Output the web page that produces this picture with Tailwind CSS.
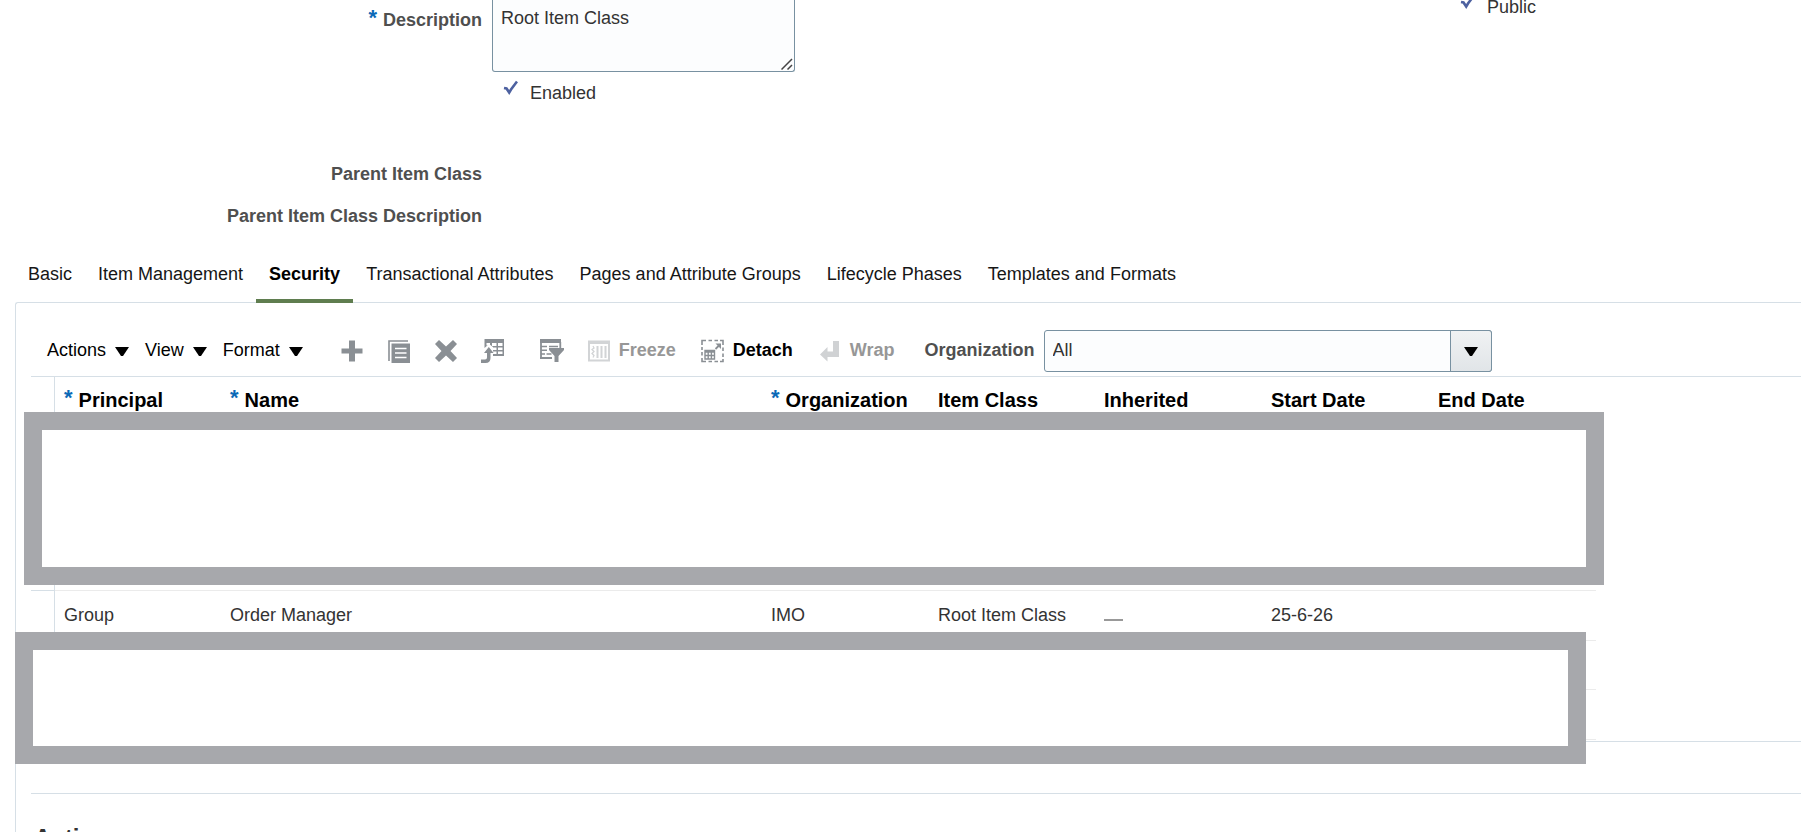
<!DOCTYPE html>
<html lang="en">
  <head>
    <meta charset="UTF-8" />
    <meta name="viewport" content="width=device-width, initial-scale=1" />
    <title>Edit Item Class</title>
    <script src="https://cdn.jsdelivr.net/npm/@tailwindcss/browser@4"></script>
  </head>
  <body class="h-screen overflow-hidden bg-white font-['Liberation_Sans',Arial,sans-serif] text-[18px] leading-5 text-[#333]">
    <!-- Item class details -->
    <form class="flex items-start justify-between">
      <div class="grid grid-cols-[482px_auto] gap-x-[10px]">
        <label for="description" class="flex items-start justify-end gap-1.5 pt-[10px] font-bold text-[#4f4f4f]">
          <span class="text-[22px] leading-4 text-[#0b69b7]">*</span>Description
        </label>
        <div class="relative w-[303px]">
          <textarea id="description" class="block h-[72px] w-full resize-none rounded-b-[3px] border border-t-0 border-[#7891a1] bg-[#fcfdfe] px-2 pt-2 focus:outline-none">Root Item Class</textarea>
          <svg class="pointer-events-none absolute bottom-0.5 right-0.5" width="12" height="12" viewBox="0 0 12 12" fill="none" stroke="#444" stroke-width="1.5"><path d="M.5 11.500 11 1M6.500 11.500 11 7" /></svg>
        </div>

        <label class="col-start-2 mt-[11px] flex gap-3 pl-[11px]">
          <span class="grid">
            <input type="checkbox" checked class="col-start-1 row-start-1 h-4 w-[15px] appearance-none" />
            <svg class="pointer-events-none col-start-1 row-start-1 -mt-[3px]" width="15" height="16" viewBox="0 0 15 16" fill="none" stroke="#4d61a0" stroke-width="2.6"><path d="M1 8 3.500 8.500 6.200 12.500 8 9.500 14 1.500" /></svg>
          </span>
          Enabled
        </label>

        <span class="mt-[61px] text-right font-bold text-[#4f4f4f]">Parent Item Class</span>
        <span class="col-start-1 mt-[22px] text-right font-bold text-[#4f4f4f]">Parent Item Class Description</span>
      </div>

      <label class="-mt-[3px] mr-[265px] flex gap-3">
        <span class="grid">
          <input type="checkbox" checked class="col-start-1 row-start-1 h-4 w-[15px] appearance-none" />
          <svg class="pointer-events-none col-start-1 row-start-1 -mt-[3px]" width="15" height="16" viewBox="0 0 15 16" fill="none" stroke="#4d61a0" stroke-width="2.6"><path d="M1 8 3.500 8.500 6.200 12.500 8 9.500 14 1.500" /></svg>
        </span>
        Public
      </label>
    </form>

    <!-- Tabs -->
    <nav class="relative z-10 ml-[15px] mt-[38px] flex text-[#161616]">
      <a href="#" class="border-b-4 border-transparent px-[13px] pb-[15px]">Basic</a>
      <a href="#" class="border-b-4 border-transparent px-[13px] pb-[15px]">Item Management</a>
      <a href="#" class="border-b-4 border-[#5f7d4f] px-[13px] pb-[15px] font-bold text-black">Security</a>
      <a href="#" class="border-b-4 border-transparent px-[13px] pb-[15px]">Transactional Attributes</a>
      <a href="#" class="border-b-4 border-transparent px-[13px] pb-[15px]">Pages and Attribute Groups</a>
      <a href="#" class="border-b-4 border-transparent px-[13px] pb-[15px]">Lifecycle Phases</a>
      <a href="#" class="border-b-4 border-transparent px-[13px] pb-[15px]">Templates and Formats</a>
    </nav>

    <section class="relative -mt-px ml-[15px] rounded-tl-[3px] border-l border-t border-[#d6dfe6] pl-[15px] pt-[27px]">
      <!-- Toolbar -->
      <div class="flex h-[46px] items-center pb-1 pl-4 text-black">
        <div class="flex gap-4">
          <button type="button" class="flex items-center gap-[9px]"><span class="pb-0.5">Actions</span><svg width="14" height="9" viewBox="0 0 14 9"><path d="M0 0h14L8 9H6z" /></svg></button>
          <button type="button" class="flex items-center gap-[9px]"><span class="pb-0.5">View</span><svg width="14" height="9" viewBox="0 0 14 9"><path d="M0 0h14L8 9H6z" /></svg></button>
          <button type="button" class="flex items-center gap-[9px]"><span class="pb-0.5">Format</span><svg width="14" height="9" viewBox="0 0 14 9"><path d="M0 0h14L8 9H6z" /></svg></button>
        </div>

        <div class="ml-[37px] flex gap-[23px] text-[#8a8f94]">
          <button type="button" aria-label="Create">
            <svg width="24" height="24" viewBox="0 0 24 24" fill="currentColor"><path d="M9 1.500h6V9.500h7.500v5H15v8H9v-8H1.500v-5H9z" /></svg>
          </button>
          <button type="button" aria-label="Duplicate">
            <svg width="24" height="24" viewBox="0 0 24 24"><path d="M2 22V2h19" fill="none" stroke="currentColor" stroke-width="1.600" /><path d="M4.500 4.500H23V24H4.500z" fill="currentColor" /><path d="M8 9.500h11.500M8 14h11.500M8 18.500h11.500" stroke="#fff" stroke-width="1.700" /></svg>
          </button>
          <button type="button" aria-label="Delete">
            <svg width="24" height="24" viewBox="0 0 24 24" fill="currentColor"><path d="M5 1 12 7.500 19 1l4 4-6.500 7 6.500 7-4 4-7-6.500L5 23l-4-4 6.500-7L1 5z" /></svg>
          </button>
          <button type="button" aria-label="Export to Excel">
            <svg width="24" height="24" viewBox="0 0 24 24"><path d="M3.500 0H23v17H12V8L8 5 3.500 9z" fill="currentColor" /><path d="M5.500 4H9v2.500H5.500zM11 4h4.500v3H11zM17 4h4.500v3H17zM12 8.500h3.500v2.500H12zM17 8.500h4.500V11H17zM12 12.500h3.500V15H12zM17 12.500h4.500V15H17z" fill="#fff" /><path d="M0 24v-3.500h4q2 0 2-2V14H3l4.800-6 4.800 6H9.500v5q0 5-5 5z" fill="currentColor" /></svg>
          </button>
        </div>

        <div class="ml-[35px] flex text-[#8a8f94]">
          <button type="button" aria-label="Query by Example">
            <svg width="24" height="24" viewBox="0 0 24 24"><path d="M0 0h21v4H0z" fill="currentColor" /><path d="M1 3v16.500M0 19h12M20.300 3v6" stroke="currentColor" stroke-width="1.800" fill="none" /><path d="M1 7.500h6M9 7.500h9M1 11.300h6M1 15.100h4M6.500 15.100h5" stroke="currentColor" stroke-width="1.500" fill="none" /><path d="M9 9h15v2l-5.500 6v6h-4v-6L9 11z" fill="currentColor" /></svg>
          </button>
        </div>

        <div class="ml-[23px] flex gap-6 font-bold">
          <button type="button" disabled class="flex items-center gap-2 text-[#979797]">
            <svg width="24" height="24" viewBox="0 0 24 24" fill="none" stroke="#d2d4d6"><path d="M2 2.500h20v19H2z" stroke-width="2" /><path d="M2 4h20" stroke-width="2" /><path d="M10.500 7v12M14.500 7v12M18.500 7v12" stroke-width="2" /><path d="M6 7l1 2-2 1.500 2 2-2 2 2 2-1 2" stroke-width="1.300" /></svg>
            <span class="pb-0.5">Freeze</span>
          </button>
          <button type="button" class="flex items-center gap-[9px]">
            <svg width="24" height="24" viewBox="0 0 24 24" fill="none" stroke="#8a8f94"><path d="M2 6V1.500h4M8.500 1.500h3.500M14.500 1.500H18M20 1.500h3V6M23 8.500V12M23 14.500V18M23 20v2.500h-3M18 22.500h-3.500M12 22.500H8.500M6 22.500H2V19M2 16.500V13M2 11V8" stroke-width="1.600" /><path d="M5 11.500h9.500v8.500H5zM5 13h9.500M5 16.500h9.500M8.200 12v8M11.400 12v8" stroke-width="1.400" /><path d="M15.500 10 20 5.500" stroke-width="1.800" /><path d="M15.500 4.500H21V10z" fill="#8a8f94" stroke="none" /></svg>
            <span class="pb-0.5">Detach</span>
          </button>
          <button type="button" disabled class="flex items-center gap-[9px] text-[#979797]">
            <svg width="24" height="24" viewBox="0 0 24 24" fill="#d0d2d4"><path d="M16 2h6v16H10.500v4.500L3 15.500 10.500 8v4.500H16z" /></svg>
            <span class="pb-0.5">Wrap</span>
          </button>
        </div>

        <label for="organization" class="ml-[30px] pb-0.5 font-bold text-[#4f4f4f]">Organization</label>
        <div class="relative ml-[9px]">
          <select id="organization" class="block h-[42px] w-[448px] appearance-none rounded-[3px] border border-[#7891a1] bg-[#fcfdfe] pb-0.5 pl-2 text-[#333] focus:outline-none">
            <option>All</option>
          </select>
          <span class="pointer-events-none absolute inset-y-0 right-0 flex w-[42px] items-center justify-center rounded-r-[3px] border border-[#7891a1] bg-linear-to-b from-[#f0f2f3] to-[#e1e5e8]">
            <svg width="14" height="9" viewBox="0 0 14 9"><path d="M0 0h14L8 9H6z" /></svg>
          </span>
        </div>
      </div>

      <!-- Security grants -->
      <div class="border-y border-[#d6dfe6] pb-px">
        <table class="w-[1565px] table-fixed border-separate border-spacing-0 text-left">
          <colgroup>
            <col class="w-6" />
            <col class="w-[166px]" />
            <col class="w-[541px]" />
            <col class="w-[167px]" />
            <col class="w-[166px]" />
            <col class="w-[167px]" />
            <col class="w-[167px]" />
            <col class="w-[167px]" />
          </colgroup>
          <thead>
            <tr class="h-[46px] align-top text-[20px] text-black">
              <td class="border-r border-[#d6dfe6]"></td>
              <th class="px-[9px] pt-[13px]"><span class="flex items-start gap-1.5"><span class="text-[22px] leading-4 text-[#0b69b7]">*</span>Principal</span></th>
              <th class="px-[9px] pt-[13px]"><span class="flex items-start gap-1.5"><span class="text-[22px] leading-4 text-[#0b69b7]">*</span>Name</span></th>
              <th class="px-[9px] pt-[13px]"><span class="flex items-start gap-1.5"><span class="text-[22px] leading-4 text-[#0b69b7]">*</span>Organization</span></th>
              <th class="px-[9px] pt-[13px]">Item Class</th>
              <th class="px-[9px] pt-[13px]">Inherited</th>
              <th class="px-[9px] pt-[13px]">Start Date</th>
              <th class="px-[9px] pt-[13px]">End Date</th>
            </tr>
          </thead>
          <tbody>
            <tr class="h-[168px]">
              <td class="border-b border-r border-[#d6dfe6]"></td>
              <td colspan="7" class="border-b border-[#ebebeb]"></td>
            </tr>
            <tr class="h-[50px]">
              <td class="border-r border-[#d6dfe6]"></td>
              <td class="border-b border-[#ebebeb] px-[9px] pb-0.5">Group</td>
              <td class="border-b border-[#ebebeb] px-[9px] pb-0.5">Order Manager</td>
              <td class="border-b border-[#ebebeb] px-[9px] pb-0.5">IMO</td>
              <td class="border-b border-[#ebebeb] px-[9px] pb-0.5">Root Item Class</td>
              <td class="border-b border-[#ebebeb] px-[9px] pb-0.5"><span class="inline-block h-0.5 w-[19px] bg-[#999]"></span></td>
              <td class="border-b border-[#ebebeb] px-[9px] pb-0.5">25-6-26</td>
              <td class="border-b border-[#ebebeb] px-[9px] pb-0.5"></td>
            </tr>
            <tr class="h-[49px]">
              <td class="border-r border-[#d6dfe6]"></td>
              <td colspan="7" class="border-b border-[#ebebeb]"></td>
            </tr>
            <tr class="h-[50px]">
              <td class="border-r border-[#d6dfe6]"></td>
              <td colspan="7" class="border-b border-[#ebebeb]"></td>
            </tr>
          </tbody>
        </table>
      </div>

      <!-- Frames covering the hidden rows -->
      <div class="absolute left-2 top-[109px] h-[173px] w-[1580px] border-[18px] border-[#a7a8ac] bg-white"></div>
      <div class="absolute -left-px top-[329px] h-[132px] w-[1571px] border-[18px] border-[#a7a8ac] bg-white"></div>

      <h2 class="mt-[51px] border-t border-[#d6dfe6] pl-[3px] pt-[30px] text-[24px] font-bold leading-7">Actions</h2>
    </section>
  </body>
</html>
